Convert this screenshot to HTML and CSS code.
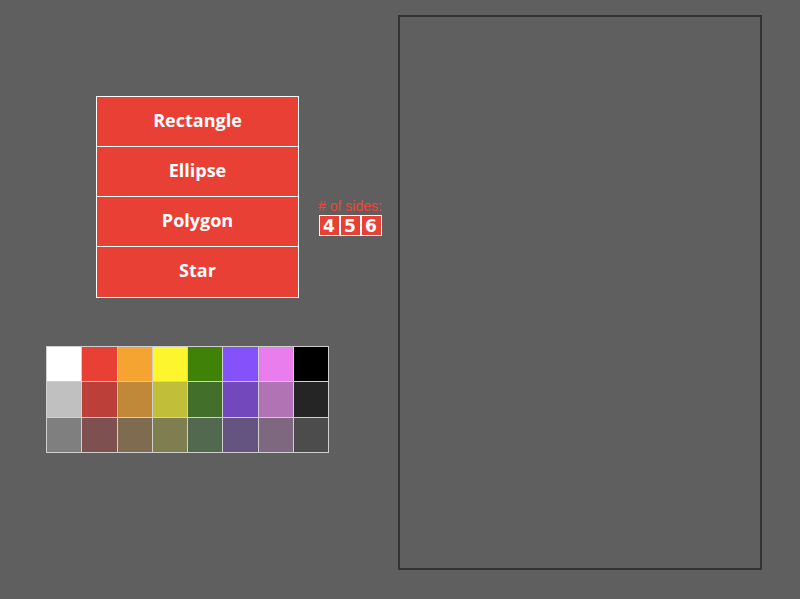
FILE: index.html
```html
<!DOCTYPE html>
<html>
<head>
<meta charset="utf-8">
<link rel="stylesheet" href="styles.css">
</head>
<body>
<div class="app">
  <div class="left">
    <div class="tools">
      <div class="shapes">
        <div class="shape">Rectangle</div>
        <div class="shape">Ellipse</div>
        <div class="shape">Polygon</div>
        <div class="shape">Star</div>
      </div>
      <div class="sides">
        <div class="sides-label"># of sides:</div>
        <div class="sides-boxes">
          <div class="side">4</div>
          <div class="side">5</div>
          <div class="side">6</div>
        </div>
      </div>
    </div>
    <div class="palette">
      <div class="sw c1"></div><div class="sw c2"></div><div class="sw c3"></div><div class="sw c4"></div>
      <div class="sw c5"></div><div class="sw c6"></div><div class="sw c7"></div><div class="sw c8"></div>
      <div class="sw d1"></div><div class="sw d2"></div><div class="sw d3"></div><div class="sw d4"></div>
      <div class="sw d5"></div><div class="sw d6"></div><div class="sw d7"></div><div class="sw d8"></div>
      <div class="sw e1"></div><div class="sw e2"></div><div class="sw e3"></div><div class="sw e4"></div>
      <div class="sw e5"></div><div class="sw e6"></div><div class="sw e7"></div><div class="sw e8"></div>
    </div>
  </div>
  <div class="canvas"></div>
</div>
</body>
</html>
```

FILE: styles.css
```css
html, body {
  margin: 0;
  padding: 0;
  background: #5f5f5f;
  width: 800px;
  height: 599px;
  overflow: hidden;
}
.app {
  display: flex;
  padding: 15px 0 0 46px;
}
.left {
  width: 352px;
  display: flex;
  flex-direction: column;
}
.tools {
  display: flex;
  align-items: flex-start;
  margin-top: 81px;
}
.shapes {
  margin-left: 50px;
  width: 201px;
  border: 1px solid #fff;
  display: flex;
  flex-direction: column;
}
.shape {
  height: 50px;
  box-sizing: border-box;
  padding-bottom: 4px;
  background: #e94035;
  border-bottom: 1px solid #fff;
  color: #fff;
  font-family: "Open Sans", sans-serif;
  font-weight: 700;
  font-size: 18px;
  display: flex;
  align-items: center;
  justify-content: center;
}
.shape:last-child {
  border-bottom: none;
  height: 50px;
}
.sides {
  margin-left: 16px;
  margin-top: 102px;
  display: flex;
  flex-direction: column;
  align-items: center;
  width: 70px;
}
.sides-label {
  color: #f0443a;
  font-family: "Liberation Sans", Arial, sans-serif;
  font-size: 14px;
  line-height: 16px;
}
.sides-boxes {
  display: flex;
  margin-top: 1px;
}
.side {
  width: 19px;
  height: 19px;
  border: 1px solid #fff;
  background: #e94035;
  color: #fff;
  font-family: "DejaVu Sans", sans-serif;
  font-weight: 700;
  font-size: 17px;
  display: flex;
  align-items: center;
  justify-content: center;
}
.palette {
  margin-top: 48px;
  display: grid;
  grid-template-columns: repeat(8, 34.25px);
  grid-auto-rows: 34.25px;
  gap: 1px;
  padding: 1px;
  width: max-content;
  background: rgba(255, 255, 255, 0.7);
}
.c1 { background: #ffffff; }
.c2 { background: #e94035; }
.c3 { background: #f5a431; }
.c4 { background: #fdf52d; }
.c5 { background: #3f8207; }
.c6 { background: #8451fa; }
.c7 { background: #e97ded; }
.c8 { background: #000000; }
.d1 { background: #c0c0c0; }
.d2 { background: #bc3f3a; }
.d3 { background: #c08839; }
.d4 { background: #c1be39; }
.d5 { background: #42702b; }
.d6 { background: #7448bd; }
.d7 { background: #b173b4; }
.d8 { background: #252525; }
.e1 { background: #7f7f7f; }
.e2 { background: #7f5050; }
.e3 { background: #7f6c50; }
.e4 { background: #7f7e50; }
.e5 { background: #52684f; }
.e6 { background: #655480; }
.e7 { background: #7d6880; }
.e8 { background: #4c4c4c; }
.canvas {
  width: 364px;
  height: 555px;
  box-sizing: border-box;
  border: 2px solid #333;
  background: #5f5f5f;
}
```
